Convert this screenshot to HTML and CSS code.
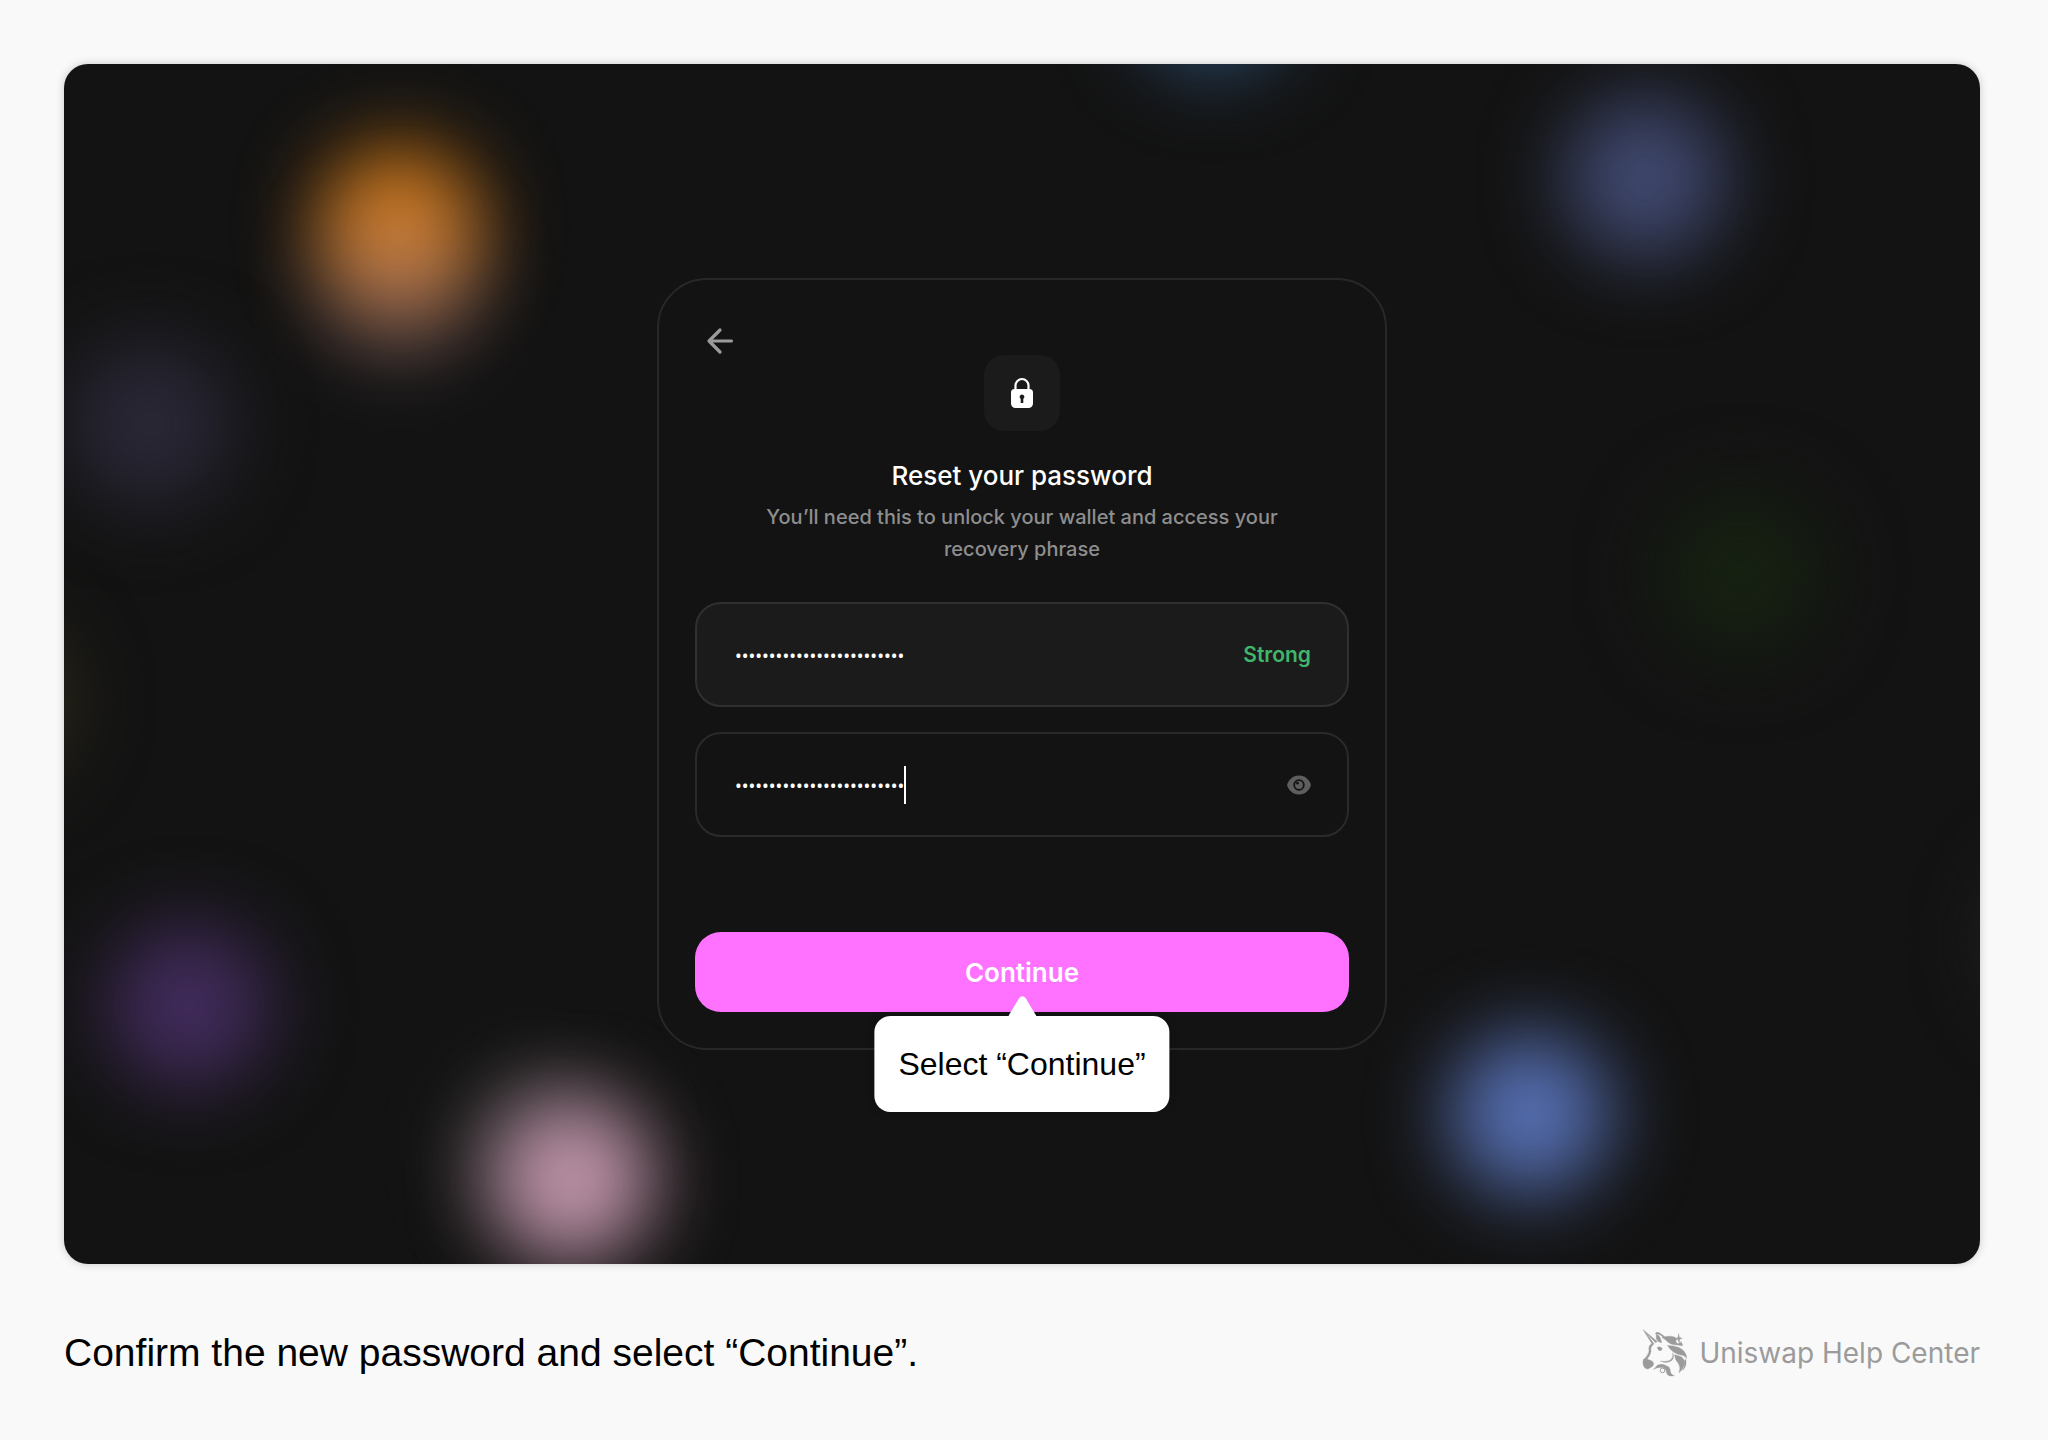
FILE: index.html
```html
<!DOCTYPE html>
<html lang="en">
<head>
  <meta charset="UTF-8" />
  <meta name="viewport" content="width=device-width, initial-scale=1" />
  <title>Reset your password</title>
  <link rel="stylesheet" href="styles.css">
</head>

<body>
  <main class="stage">
    <!-- blurred token lights -->
    <div class="lights" aria-hidden="true">
      <span class="light orange"></span>
      <span class="light rose"></span>
      <span class="light teal"></span>
      <span class="light indigo"></span>
      <span class="light dusk"></span>
      <span class="light green"></span>
      <span class="light olive"></span>
      <span class="light purple"></span>
      <span class="light ash"></span>
      <span class="light pink"></span>
      <span class="light blue"></span>
      <span class="light grey"></span>
    </div>

    <form class="card" onsubmit="return false">
      <button type="button" class="back" aria-label="Back">
        <svg viewBox="0 0 28 28" width="28" height="28" fill="none" stroke="#9b9b9b" stroke-width="3.2" stroke-linecap="round" stroke-linejoin="round">
          <path d="M25.5 14H3M14 3L3 14l11 11" />
        </svg>
      </button>

      <div class="lock">
        <svg viewBox="0 0 24 32" width="24" height="32">
          <path d="M5.500 14V8.500a6.500 6.500 0 0 1 13 0V14" fill="none" stroke="#fff" stroke-width="2.200" />
          <path fill="#fff" fill-rule="evenodd" d="M4.500 12h15A3.500 3.500 0 0 1 23 15.500v11a4.500 4.500 0 0 1-4.500 4.500h-13A4.500 4.500 0 0 1 1 26.500v-11A3.500 3.500 0 0 1 4.500 12zM12 17.500a2.300 2.300 0 0 0-1.300 4.200V26h2.600v-4.300A2.300 2.300 0 0 0 12 17.500z" />
        </svg>
      </div>

      <h1>Reset your password</h1>
      <p class="subtitle">You’ll need this to unlock your wallet and access your recovery phrase</p>

      <div class="field filled">
        <input type="password" aria-label="New password" value="correct-horse-battery-sta" />
        <span class="strength">Strong</span>
      </div>

      <div class="field">
        <input type="password" aria-label="Confirm password" value="correct-horse-battery-sta" />
        <span class="caret"></span>
        <button type="button" class="reveal" aria-label="Show password">
          <svg viewBox="0 0 24 20" width="24" height="20">
            <path fill="#5e5e5e" d="M12 .5C18.500 .5 22 5 23.500 8.500q.6 1.500 0 3C22 15 18.500 19.500 12 19.500S2 15 .5 11.500q-.6-1.500 0-3C2 5 5.500 .5 12 .5z" />
            <circle cx="12" cy="10" r="4.800" fill="#5e5e5e" stroke="#131313" stroke-width="1.800" />
            <circle cx="10.500" cy="8.200" r="1.400" fill="#131313" />
          </svg>
        </button>
      </div>

      <div class="action">
        <button type="submit" class="continue">Continue</button>
        <div class="tooltip" role="tooltip">
          <svg class="tip" viewBox="0 0 28 20" width="28" height="20">
            <path fill="#fff" d="M0 20L10.500 2.500Q14-2 17.500 2.500L28 20z" />
          </svg>
          Select “Continue”
        </div>
      </div>
    </form>
  </main>

  <footer>
    <p class="caption">Confirm the new password and select “Continue”.</p>
    <div class="brand">
      <svg viewBox="0 0 136 146" width="45" height="48" fill="#9b9b9b" stroke="#9b9b9b" stroke-width="1">
        <path d="M3 2L46 38l-5 4L12 12l24 33-4 4z" />
        <path d="M40 14Q44 6 56 14Q68 20 73 32Q64 24 55 18Q48 14 44 16z" />
        <path d="M43 15Q56 20 59 42Q46 40 43 28z" />
        <path d="M60 26Q84 18 100 25L105 32 102 39 108 45 117 42 121 51Q108 48 98 48Q84 46 76 38Q70 30 60 26z" />
        <path d="M111 14l2 11 9 3-8 3-1 13-4-12-8-3 8-3zM118 38l6 12-8-3z" />
        <path d="M77 50Q96 50 112 56Q134 66 136 90Q130 80 117 79Q92 74 77 50z" />
        <path d="M98 78Q126 82 129 98Q131 118 112 133Q118 116 110 104Q100 94 98 78z" />
        <path d="M133 92Q137 112 124 126Q131 112 128 98z" />
        <path d="M27 46Q18 52 21 66Q20 78 4 94L11 96Q25 82 27 68Q24 54 34 48z" />
        <path d="M4 93Q1 101 3 109Q7 122 18 122L26 117Q35 114 35 105Q33 96 22 94L11 90z" />
        <path d="M46 56Q54 51 61 59Q61 66 54 66Q47 64 46 56z" />
        <path d="M55 98Q74 101 86 94Q96 85 93 72Q99 87 90 96Q78 106 55 98z" />
        <path d="M34 123Q42 116 46 110Q60 104 72 111Q84 114 85 124Q86 140 98 142Q80 146 75 135Q72 118 62 117Q50 116 44 119Q38 122 34 123z" />
        <circle cx="62" cy="126" r="7" fill="none" stroke-width="3" />
      </svg>
      <span>Uniswap Help Center</span>
    </div>
  </footer>
</body>
</html>
```

FILE: styles.css
```css
* {
  box-sizing: border-box;
}

body {
  margin: 0;
  min-height: 100vh;
  padding: 64px 68px 64px 64px;
  background-color: #f9f9f9;
  color: #000;
  font-family: Inter, sans-serif;
  display: flex;
  flex-direction: column;
}

h1, p {
  margin: 0;
}

button {
  border: none;
  background: none;
  padding: 0;
  font-family: inherit;
  cursor: pointer;
}

svg {
  display: block;
}

.stage {
  position: relative;
  min-height: 1200px;
  display: flex;
  align-items: center;
  justify-content: center;
  background-color: #131313;
  border-radius: 24px;
  box-shadow: 0 0 8px rgba(0, 0, 0, 0.2);
}

/* background lights */
.lights {
  position: absolute;
  inset: 0;
  overflow: hidden;
  border-radius: 24px;
}

.light {
  position: absolute;
  width: 160px;
  height: 160px;
  margin: -80px 0 0 -80px;
  border-radius: 50%;
  filter: blur(40px);
}

.orange { left: 17.5%; top: 13.5%; background: #c97310; }
.rose { left: 17.5%; top: 18%; background: #c496a6; opacity: 0.35; }
.teal { left: 60%; top: -6%; background: #2a4a6c; }
.indigo { left: 82.5%; top: 9.5%; background: #414a72; }
.dusk { left: 4.5%; top: 30%; background: #2b2838; }
.green { left: 87.5%; top: 42.5%; background: #162111; }
.olive { left: -4%; top: 53%; background: #302d1c; }
.purple { left: 6.5%; top: 78.5%; background: #432c5e; }
.ash { left: 25%; top: 90.5%; background: #444; opacity: 0.6; }
.pink { left: 26.5%; top: 93%; background: #c094aa; }
.blue { left: 76.5%; top: 87.5%; background: #5670b4; }
.grey { left: 105%; top: 73%; background: #282828; }

.card {
  position: relative;
  width: 730px;
  padding: 36px;
  display: flex;
  flex-direction: column;
  border: 2px solid #282828;
  border-radius: 50px;
  background-color: #131313;
}

.back {
  align-self: flex-start;
  margin: 11px 0 0 11px;
}

.lock {
  align-self: center;
  width: 76px;
  height: 76px;
  display: flex;
  align-items: center;
  justify-content: center;
  border-radius: 20px;
  background-color: #1b1b1b;
}

h1 {
  margin-top: 28px;
  font-size: 26px;
  line-height: 34px;
  font-weight: 500;
  text-align: center;
  color: #fff;
}

.subtitle {
  margin: 8px 48px 37px;
  font-size: 20px;
  line-height: 32px;
  font-weight: 500;
  text-align: center;
  color: #8e8e8e;
}

.field {
  height: 105px;
  padding: 0 36px 0 38px;
  display: flex;
  align-items: center;
  border: 2px solid #2a2a2a;
  border-radius: 26px;
}

.field + .field {
  margin-top: 25px;
}

.field.filled {
  background-color: #1b1b1b;
  border-color: #303030;
}

.field input {
  field-sizing: content;
  min-width: 0;
  padding: 0;
  border: none;
  outline: none;
  background: none;
  color: #fff;
  font-family: "Noto Sans", sans-serif;
  font-size: 18px;
}

.caret {
  width: 2px;
  height: 38px;
  background-color: #fff;
}

.strength {
  margin-left: auto;
  font-size: 21px;
  font-weight: 600;
  color: #40b66b;
}

.reveal {
  margin-left: auto;
}

.action {
  position: relative;
  margin-top: 95px;
}

.continue {
  width: 100%;
  height: 80px;
  border-radius: 26px;
  background-color: #ff72ff;
  color: #fff;
  font-size: 26px;
  font-weight: 600;
}

.tooltip {
  position: absolute;
  top: 100%;
  left: 50%;
  transform: translateX(-50%);
  margin-top: 4px;
  padding: 28px 24px;
  border-radius: 16px;
  background-color: #fff;
  box-shadow: 0 0 8px rgba(0, 0, 0, 0.2);
  font-family: "Liberation Sans", sans-serif;
  font-size: 32px;
  line-height: 40px;
  white-space: nowrap;
}

.tip {
  position: absolute;
  left: 50%;
  bottom: 100%;
  margin-left: -14px;
}

footer {
  margin-top: 65px;
  display: flex;
  align-items: center;
  justify-content: space-between;
}

.caption {
  font-family: "Liberation Sans", sans-serif;
  font-size: 39px;
  line-height: 48px;
}

.brand {
  display: flex;
  align-items: center;
  gap: 12px;
  font-size: 28px;
  color: #9b9b9b;
}
```
